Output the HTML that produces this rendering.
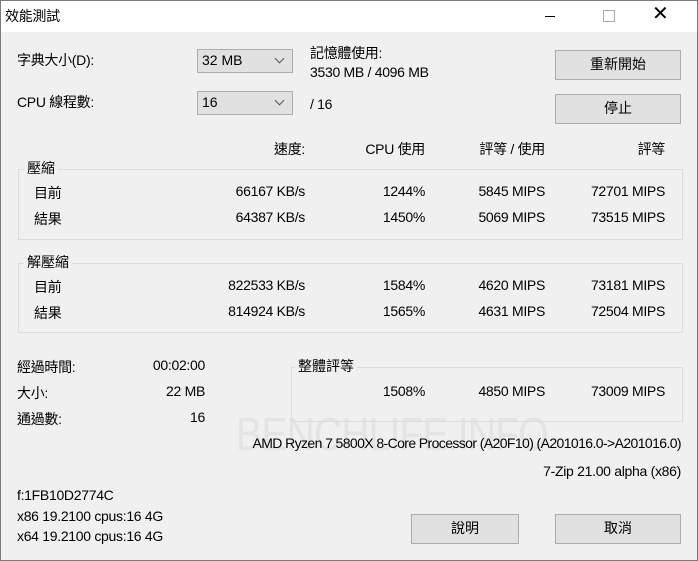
<!DOCTYPE html><html><head><meta charset="utf-8"><style>
body{margin:0;width:698px;height:561px;overflow:hidden;font-family:"Liberation Sans","Noto Sans CJK TC",sans-serif;font-size:14px;color:#000}
#w{position:absolute;left:0;top:0;width:696px;height:559px;border:1px solid #7a7a7a;background:#f0f0f0}
#t{position:absolute;left:0;top:0;width:696px;height:31px;background:#fff}
.a{position:absolute;white-space:nowrap;margin-top:-2px;letter-spacing:-0.3px}
.r{position:absolute;white-space:nowrap;text-align:right;margin-top:-2px;letter-spacing:-0.3px}
.btn{position:absolute;background:#e1e1e1;border:1px solid #adadad;text-align:center;box-sizing:border-box;line-height:27px}
.cb{position:absolute;background:#e1e1e1;border:1px solid #adadad;box-sizing:border-box;line-height:21px;padding-left:4px}
.cb:after{content:"";position:absolute;right:9px;top:5px;width:6px;height:6px;border-right:1px solid #555;border-bottom:1px solid #555;transform:rotate(45deg)}
.g{position:absolute;border:1px solid #dcdcdc;box-sizing:border-box}
.gl{position:absolute;background:#f0f0f0;padding:0 3px;margin-top:-2px}
</style></head><body><div id="w">
<div id="t"></div>
<div class="a" style="left:4px;top:7px">效能測試</div>
<div class="a" style="left:544px;top:17px;width:10px;height:1px;background:#000"></div>
<div class="a" style="left:602px;top:11px;width:10px;height:10px;border:1px solid #aaa"></div>
<div class="a" style="left:651px;top:0px;font-size:20px;line-height:31px;font-weight:100">✕</div>
<div class="a" style="left:16px;top:51px">字典大小(D):</div>
<div class="a" style="left:16px;top:93px">CPU 線程數:</div>
<div class="cb" style="left:196px;top:48px;width:96px;height:24px">32 MB</div>
<div class="cb" style="left:196px;top:90px;width:96px;height:24px">16</div>
<div class="a" style="left:309px;top:44px">記憶體使用:</div>
<div class="a" style="left:309px;top:65px">3530 MB / 4096 MB</div>
<div class="a" style="left:309px;top:97px">/ 16</div>
<div class="btn" style="left:554px;top:49px;width:126px;height:30px">重新開始</div>
<div class="btn" style="left:554px;top:93px;width:126px;height:30px">停止</div>
<div class="a" style="left:235px;top:408px;font-size:46px;color:#e4e4e4;letter-spacing:-1px;transform:scaleX(0.85);transform-origin:left">BENCHLIFE.INFO</div>
<div class="r" style="right:392px;top:140px">速度:</div>
<div class="r" style="right:272px;top:140px">CPU 使用</div>
<div class="r" style="right:152px;top:140px">評等 / 使用</div>
<div class="r" style="right:32px;top:140px">評等</div>
<div class="g" style="left:17px;top:168px;width:665px;height:71px"></div>
<div class="gl" style="left:23px;top:159px">壓縮</div>
<div class="a" style="left:33px;top:184px">目前</div><div class="a" style="left:33px;top:210px">結果</div>
<div class="r" style="right:392px;top:184px">66167 KB/s</div><div class="r" style="right:272px;top:184px">1244%</div><div class="r" style="right:152px;top:184px">5845 MIPS</div><div class="r" style="right:32px;top:184px">72701 MIPS</div>
<div class="r" style="right:392px;top:210px">64387 KB/s</div><div class="r" style="right:272px;top:210px">1450%</div><div class="r" style="right:152px;top:210px">5069 MIPS</div><div class="r" style="right:32px;top:210px">73515 MIPS</div>
<div class="g" style="left:17px;top:262px;width:665px;height:70px"></div>
<div class="gl" style="left:23px;top:253px">解壓縮</div>
<div class="a" style="left:33px;top:278px">目前</div><div class="a" style="left:33px;top:304px">結果</div>
<div class="r" style="right:392px;top:278px">822533 KB/s</div><div class="r" style="right:272px;top:278px">1584%</div><div class="r" style="right:152px;top:278px">4620 MIPS</div><div class="r" style="right:32px;top:278px">73181 MIPS</div>
<div class="r" style="right:392px;top:304px">814924 KB/s</div><div class="r" style="right:272px;top:304px">1565%</div><div class="r" style="right:152px;top:304px">4631 MIPS</div><div class="r" style="right:32px;top:304px">72504 MIPS</div>
<div class="a" style="left:16px;top:358px">經過時間:</div><div class="a" style="left:16px;top:384px">大小:</div><div class="a" style="left:16px;top:410px">通過數:</div>
<div class="r" style="right:492px;top:358px">00:02:00</div><div class="r" style="right:492px;top:384px">22 MB</div><div class="r" style="right:492px;top:410px">16</div>
<div class="g" style="left:290px;top:366px;width:392px;height:55px"></div>
<div class="gl" style="left:294px;top:357px">整體評等</div>
<div class="r" style="right:272px;top:384px">1508%</div><div class="r" style="right:152px;top:384px">4850 MIPS</div><div class="r" style="right:32px;top:384px">73009 MIPS</div>
<div class="r" style="right:16px;top:436px;letter-spacing:-0.6px">AMD Ryzen 7 5800X 8-Core Processor (A20F10) (A201016.0-&gt;A201016.0)</div>
<div class="r" style="right:16px;top:464px">7-Zip 21.00 alpha (x86)</div>
<div class="a" style="left:16px;top:488px">f:1FB10D2774C</div>
<div class="a" style="left:16px;top:509px">x86 19.2100 cpus:16 4G</div>
<div class="a" style="left:16px;top:529px">x64 19.2100 cpus:16 4G</div>
<div class="btn" style="left:410px;top:513px;width:108px;height:30px">說明</div>
<div class="btn" style="left:554px;top:513px;width:126px;height:30px">取消</div>
</div></body></html>
